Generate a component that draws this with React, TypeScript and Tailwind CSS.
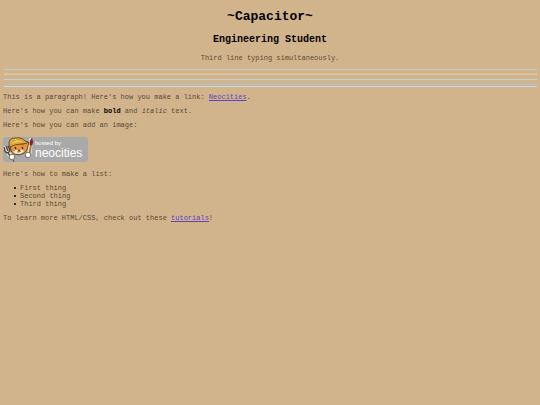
import React from "react";

const things = ["First thing", "Second thing", "Third thing"];

const HostedBadge = () => {
    return (
        <svg width="85" height="25" viewBox="0 0 85 25" role="img" aria-label="Hosted by Neocities">
            <rect x="0" y="0" width="85" height="25" rx="3" fill="#a9a9a9" />
            {/* white outline behind fork, brush and paws */}
            <path d="M2 11 L6 17 L9 20 M28 3 L26 19" stroke="#f1eee8" strokeWidth="4" strokeLinecap="round" fill="none" />
            {/* fork */}
            <path d="M1 10 L2 14 Q4 17 6 15 Q8 13 5 9 M3 9 L5 14 M5 16 L8 20" stroke="#4f4a45" strokeWidth="1.5" fill="none" />
            {/* brush */}
            <path d="M28 8 L26 19" stroke="#a5702c" strokeWidth="1.8" />
            <path d="M29 1 L30 5 L29 8 L27 8 L27 4 Z" fill="#8b2323" stroke="#6d1a1a" strokeWidth="0.5" />
            {/* head */}
            <path d="M7 6 L8 14 Q11 18 16 18 Q22 17 24 13 L26 5 L20 7 Z" fill="#e8943a" stroke="#4b3516" strokeWidth="0.8" />
            <path d="M10 15 Q12 13 15 13 Q19 12 21 14 Q19 17 16 17 Q12 17 10 15 Z" fill="#fbeed6" />
            {/* hat */}
            <path d="M6 8 Q5 1 12 1 Q19 0 22 4 L25 5 Q24 7 18 7 Q12 7 7 10 Z" fill="#dba93a" stroke="#5b4016" strokeWidth="0.8" />
            <path d="M9 6 Q14 3 19 5 M12 2 L14 4" stroke="#f2d568" fill="none" />
            <path d="M12 10 L13 12 M19 10 L20 12" stroke="#2d2013" strokeWidth="1.2" />
            <path d="M15 13 L17 13 L16 14 Z M14 15 L16 15 L18 14" fill="#5d2b16" stroke="#5d2b16" strokeWidth="0.6" />
            {/* paws */}
            <circle cx="9" cy="20" r="2.8" fill="#fff" stroke="#62533d" strokeWidth="0.8" />
            <circle cx="25" cy="18" r="2.8" fill="#fff" stroke="#62533d" strokeWidth="0.8" />
            <path d="M10 23 L11 25" stroke="#4b4b4b" />
            <text x="32" y="8" fontSize="6" fill="#fff" fontFamily="'Liberation Sans', sans-serif">hosted by</text>
            <text x="32" y="20" fontSize="12" fill="#fff" fontFamily="'Liberation Sans', sans-serif">neocities</text>
        </svg>
    )
}

const App = () => {
    return (
        <div className="min-h-screen bg-[#d2b48c] px-[3px] pt-[9px] font-['Liberation_Mono',monospace] text-[7px] leading-[8px] text-[#5c4a33]">
            <header className="text-center">
                <h1 className="text-[13px] leading-4 font-bold text-black">~Capacitor~</h1>
                <h2 className="mt-2 text-[10px] leading-[13px] font-bold text-black">Engineering Student</h2>
                <p className="mt-2">Third line typing simultaneously.</p>
            </header>
            <div className="mt-1.5 ml-px flex flex-col gap-[3px]">
                <hr className="h-0.5 border-t border-b border-t-[#c3b7a2] border-b-[#d4cab8]" />
                <hr className="h-0.5 border-t border-b border-t-[#d5bd97] border-b-[#e0cba8]" />
                <hr className="h-0.5 border-t border-b border-t-[#bbb7aa] border-b-[#dccdb2]" />
                <hr className="h-[4px] border-t-2 border-b border-t-[#bdbab0] border-b-[#d9d5ca] bg-[#bdbab0]" />
            </div>
            <main className="mt-1.5 flex flex-col items-start gap-1.5">
                <p>This is a paragraph! Here's how you make a link: <a href="https://neocities.org" className="text-[#6042c0] underline">Neocities</a>.</p>
                <p>Here's how you can make <strong className="text-black">bold</strong> and <em>italic</em> text.</p>
                <p>Here's how you can add an image:</p>
                <div className="py-0.5">
                    <HostedBadge />
                </div>
                <p>Here's how to make a list:</p>
                <ul className="pl-[11px]">
                    {things.map((thing) => (
                        <li key={thing} className="flex items-center gap-1 before:size-0.5 before:rounded-full before:bg-black">{thing}</li>
                    ))}
                </ul>
                <p>To learn more HTML/CSS, check out these <a href="https://neocities.org/tutorials" className="text-[#6042c0] underline">tutorials</a>!</p>
            </main>
        </div>
    )
}

export default App;
